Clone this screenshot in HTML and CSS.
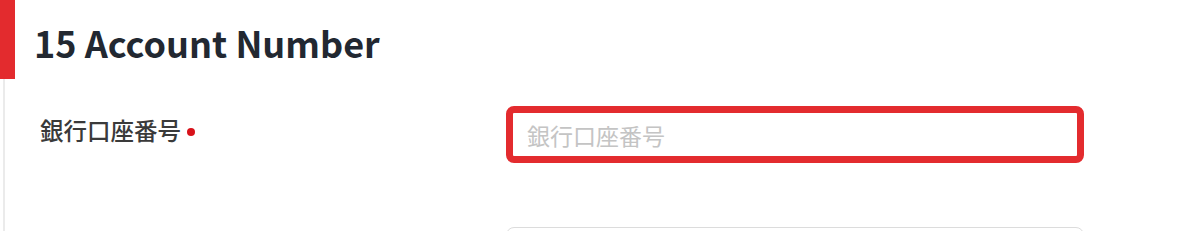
FILE: index.html
```html
<!DOCTYPE html>
<html lang="ja">
<head>
  <meta charset="UTF-8" />
  <meta name="viewport" content="width=device-width, initial-scale=1.0" />
  <title>Account Number</title>
  <link rel="stylesheet" href="styles.css">
</head>
<body>

  <div class="section">
    <div class="section-title">
      <h2>15 Account Number</h2>
    </div>

    <div class="form">
      <div class="form-row">
        <label class="form-label" for="account">銀行口座番号<span class="required"></span></label>
        <input class="form-input error" id="account" type="text" placeholder="銀行口座番号">
      </div>
      <div class="form-row">
        <label class="form-label" for="next"></label>
        <input class="form-input" id="next" type="text">
      </div>
    </div>
  </div>

</body>
</html>
```

FILE: styles.css
```css
* {
  box-sizing: border-box;
}

body {
  font-family: "Noto Sans CJK JP", "Noto Sans", sans-serif;
  margin: 0;
  background: #fff;
  color: #222;
}

.section-title {
  height: 79px;
  border-left: 15px solid #e32b2e;
  padding: 5px 0 0 19px;
  display: flex;
  align-items: center;
}

.section-title h2 {
  margin: 0;
  font-size: 36px;
  font-weight: 700;
  color: #222831;
}

.form {
  margin-left: 3px;
  border-left: 2px solid #ebebeb;
  padding: 27px 0 0 35px;
  display: flex;
  flex-direction: column;
  gap: 64px;
}

.form-row {
  display: flex;
  align-items: center;
}

.form-label {
  width: 466px;
  font-size: 23.5px;
  font-weight: 500;
  color: #3a3a3a;
  display: flex;
  align-items: center;
  margin-top: -10px;
}

.required {
  display: inline-block;
  width: 8px;
  height: 8px;
  margin-left: 6px;
  margin-top: 4px;
  border-radius: 50%;
  background: #d8121a;
}

.form-input {
  width: 578px;
  height: 57px;
  padding: 0 14px;
  border: 1px solid #dcdcdc;
  border-radius: 8px;
  font-family: inherit;
  font-size: 23px;
  color: #333;
  background: #fff;
  outline: none;
}

.form-input::placeholder {
  color: #c4c4c4;
}

.form-input.error {
  border: 7px solid #e32b2e;
}
```
